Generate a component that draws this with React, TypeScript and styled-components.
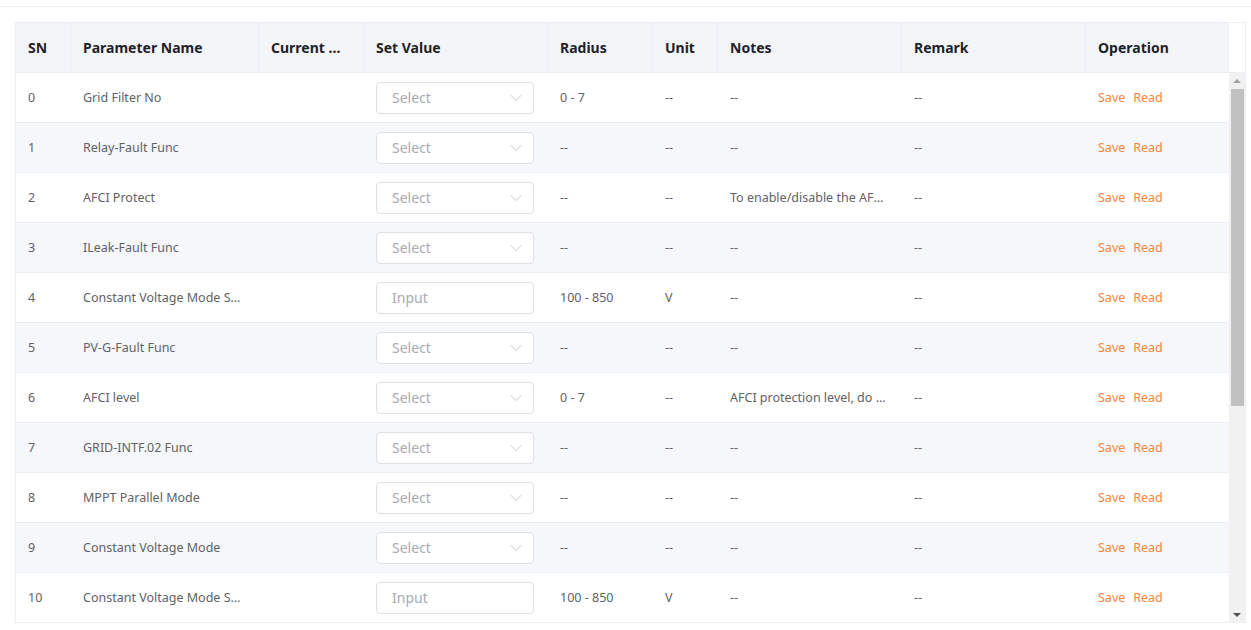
import { ChevronDown } from "lucide-react";
import styled, { createGlobalStyle } from "styled-components";

interface Param {
  name: string;
  kind: "Select" | "Input";
  radius: string;
  unit: string;
  notes: string;
  remark: string;
}

const COLUMNS = "55px 188px 105px 184px 105px 65px 184px 184px 143px";

const headers = [
  "SN",
  "Parameter Name",
  "Current Value",
  "Set Value",
  "Radius",
  "Unit",
  "Notes",
  "Remark",
  "Operation",
];

const params: Param[] = [
  { name: "Grid Filter No", kind: "Select", radius: "0 - 7", unit: "--", notes: "--", remark: "--" },
  { name: "Relay-Fault Func", kind: "Select", radius: "--", unit: "--", notes: "--", remark: "--" },
  { name: "AFCI Protect", kind: "Select", radius: "--", unit: "--", notes: "To enable/disable the AFCI function", remark: "--" },
  { name: "ILeak-Fault Func", kind: "Select", radius: "--", unit: "--", notes: "--", remark: "--" },
  { name: "Constant Voltage Mode Setting", kind: "Input", radius: "100 - 850", unit: "V", notes: "--", remark: "--" },
  { name: "PV-G-Fault Func", kind: "Select", radius: "--", unit: "--", notes: "--", remark: "--" },
  { name: "AFCI level", kind: "Select", radius: "0 - 7", unit: "--", notes: "AFCI protection level, do not change", remark: "--" },
  { name: "GRID-INTF.02 Func", kind: "Select", radius: "--", unit: "--", notes: "--", remark: "--" },
  { name: "MPPT Parallel Mode", kind: "Select", radius: "--", unit: "--", notes: "--", remark: "--" },
  { name: "Constant Voltage Mode", kind: "Select", radius: "--", unit: "--", notes: "--", remark: "--" },
  { name: "Constant Voltage Mode Setting", kind: "Input", radius: "100 - 850", unit: "V", notes: "--", remark: "--" },
  { name: "Arc Detect Threshold", kind: "Input", radius: "0 - 100", unit: "--", notes: "--", remark: "--" },
  { name: "Island Protect Func", kind: "Select", radius: "--", unit: "--", notes: "--", remark: "--" },
  { name: "DCI Fault Func", kind: "Select", radius: "--", unit: "--", notes: "--", remark: "--" },
  { name: "Power Factor Mode", kind: "Select", radius: "--", unit: "--", notes: "--", remark: "--" },
  { name: "Reactive Power Mode", kind: "Select", radius: "--", unit: "--", notes: "--", remark: "--" },
  { name: "Start Up Time", kind: "Input", radius: "10 - 600", unit: "s", notes: "--", remark: "--" },
  { name: "Reconnect Time", kind: "Input", radius: "10 - 600", unit: "s", notes: "--", remark: "--" },
];

const GlobalStyle = createGlobalStyle`
  html, body {
    margin: 0;
    padding: 0;
    overflow: hidden;
    background: #ffffff;
    font-family: "Noto Sans", "Noto Sans CJK SC", "Liberation Sans", sans-serif;
  }
`;

const App: React.FC = () => {
  return (
    <>
      <GlobalStyle />
      <TopStrip />
      <Content>
        <Table>
          <HeaderRow>
            {headers.map((h) => (
              <HeaderCell key={h}>
                <span>{h}</span>
              </HeaderCell>
            ))}
            <Gutter />
          </HeaderRow>
          <Body>
            <Rows>
              {params.map((p, i) => (
                <Row key={i} $striped={i % 2 === 1}>
                  <Cell>{i}</Cell>
                  <Cell>
                    <Clip>{p.name}</Clip>
                  </Cell>
                  <Cell />
                  <Cell>
                    {p.kind === "Select" ? (
                      <Field>
                        <span>Select</span>
                        <ChevronDown size={20} strokeWidth={1.1} color="#c0c4cc" />
                      </Field>
                    ) : (
                      <Field>
                        <span>Input</span>
                      </Field>
                    )}
                  </Cell>
                  <Cell>{p.radius}</Cell>
                  <Cell>{p.unit}</Cell>
                  <Cell>
                    <Clip>{p.notes}</Clip>
                  </Cell>
                  <Cell>{p.remark}</Cell>
                  <Cell>
                    <Actions>
                      <LinkButton>Save</LinkButton>
                      <LinkButton>Read</LinkButton>
                    </Actions>
                  </Cell>
                </Row>
              ))}
            </Rows>
            <ScrollBar>
              <ScrollArrow>
                <svg width="16" height="16" viewBox="0 0 16 16">
                  <polygon points="4,10 12,10 8,6" fill="#a3a3a3" />
                </svg>
              </ScrollArrow>
              <ScrollTrack>
                <ScrollThumb />
              </ScrollTrack>
              <ScrollArrow>
                <svg width="16" height="16" viewBox="0 0 16 16">
                  <polygon points="4,6 12,6 8,10" fill="#505050" />
                </svg>
              </ScrollArrow>
            </ScrollBar>
          </Body>
        </Table>
      </Content>
    </>
  );
};

export default App;

const TopStrip = styled("div")`
  height: 6px;
  border-bottom: 1px solid #ebeef5;
`;

const Content = styled("div")`
  padding: 15px 0 0 15px;
`;

const Table = styled("div")`
  width: 1229px;
  border: 1px solid #ebeef5;
  border-bottom: none;
`;

const HeaderRow = styled("div")`
  display: grid;
  grid-template-columns: ${COLUMNS} 16px;
  height: 49px;
  background: #f3f5f9;
  border-bottom: 1px solid #ebeef5;
`;

const HeaderCell = styled("div")`
  display: flex;
  align-items: center;
  padding: 0 22px 0 12px;
  border-right: 1px solid #ebeef5;
  font-size: 14px;
  font-weight: 700;
  color: #1f2329;
  min-width: 0;
  span {
    white-space: nowrap;
    overflow: hidden;
    text-overflow: ellipsis;
  }
`;

const Gutter = styled("div")`
  background: #ffffff;
`;

const Body = styled("div")`
  display: flex;
  height: 550px;
`;

const Rows = styled("div")`
  flex: 1;
  overflow: hidden;
`;

const Row = styled("div")<{ $striped: boolean }>`
  display: grid;
  grid-template-columns: ${COLUMNS};
  height: 50px;
  box-sizing: border-box;
  border-bottom: 1px solid #ebeef5;
  background: ${(p) => (p.$striped ? "#f6f7fa" : "#ffffff")};
`;

const Cell = styled("div")`
  display: flex;
  align-items: center;
  padding: 0 12px;
  min-width: 0;
  font-size: 12.5px;
  color: #606266;
  white-space: nowrap;
`;

const Clip = styled("span")`
  overflow: hidden;
  text-overflow: ellipsis;
  white-space: nowrap;
`;

const Field = styled("div")`
  box-sizing: border-box;
  width: 158px;
  height: 32px;
  display: flex;
  align-items: center;
  justify-content: space-between;
  padding: 0 7px 0 15px;
  border: 1px solid #dcdfe6;
  border-radius: 4px;
  background: #ffffff;
  font-size: 14px;
  color: #a8abb2;
`;

const Actions = styled("div")`
  display: flex;
  gap: 8px;
`;

const LinkButton = styled("span")`
  color: #f5853f;
  font-size: 12.5px;
  cursor: pointer;
`;

const ScrollBar = styled("div")`
  width: 16px;
  display: flex;
  flex-direction: column;
  background: #f1f1f1;
`;

const ScrollArrow = styled("div")`
  height: 16px;
  display: flex;
  align-items: center;
  justify-content: center;
`;

const ScrollTrack = styled("div")`
  flex: 1;
`;

const ScrollThumb = styled("div")`
  height: 317px;
  margin: 0 1px 0 2px;
  background: #c1c1c1;
`;
